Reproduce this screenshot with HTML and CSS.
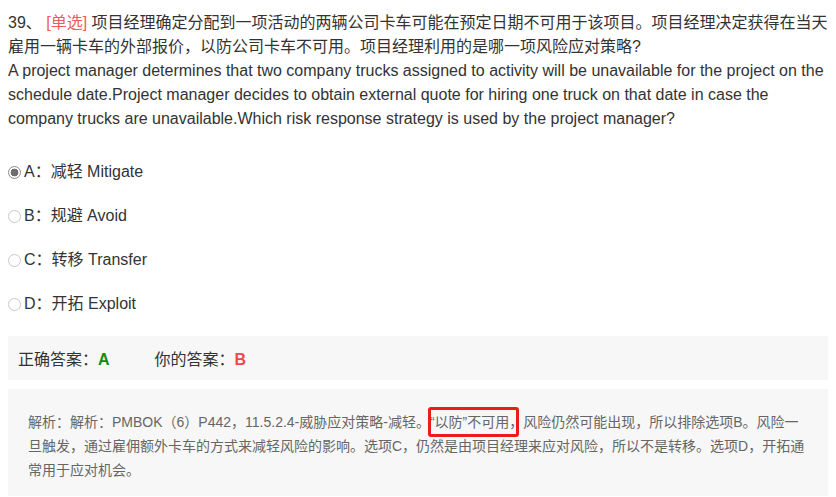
FILE: index.html
```html
<!DOCTYPE html>
<html lang="zh-CN">
<head>
<meta charset="utf-8">
<link rel="stylesheet" href="styles.css">
</head>
<body>
<div class="page">
  <div class="question">
    <span class="num">39、</span> <span class="tag">[单选]</span> 项目经理确定分配到一项活动的两辆公司卡车可能在预定日期不可用于该项目。项目经理决定获得在当天雇用一辆卡车的外部报价，以防公司卡车不可用。项目经理利用的是哪一项风险应对策略?<br>A project manager determines that two company trucks assigned to activity will be unavailable for the project on the schedule date.Project manager decides to obtain external quote for hiring one truck on that date in case the company trucks are unavailable.Which risk response strategy is used by the project manager?
  </div>
  <ul class="options">
    <li class="option"><span class="radio checked"></span><span>A：减轻 Mitigate</span></li>
    <li class="option"><span class="radio"></span><span>B：规避 Avoid</span></li>
    <li class="option"><span class="radio"></span><span>C：转移 Transfer</span></li>
    <li class="option"><span class="radio"></span><span>D：开拓 Exploit</span></li>
  </ul>
  <div class="answers">
    <span class="ans">正确答案：<b class="right">A</b></span>
    <span class="ans">你的答案：<b class="wrong">B</b></span>
  </div>
  <div class="analysis">
    解析：解析：PMBOK（6）P442，11.5.2.4-威胁应对策略-减轻。<span class="mark">“以防”不可用，</span>风险仍然可能出现，所以排除选项B。风险一旦触发，通过雇佣额外卡车的方式来减轻风险的影响。选项C，仍然是由项目经理来应对风险，所以不是转移。选项D，开拓通常用于应对机会。
  </div>
</div>
</body>
</html>
```

FILE: styles.css
```css
* { box-sizing: border-box; }
html, body { margin: 0; padding: 0; background: #fff; }
body {
  font-family: "Liberation Sans", Arial, "Noto Sans CJK SC", sans-serif;
  color: #333;
  overflow: hidden;
}
.page {
  padding: 11px 8px 0 8px;
}
.question {
  font-size: 16px;
  line-height: 24px;
}
.tag { color: #f05a5a; }
.options {
  list-style: none;
  margin: 29px 0 0 0;
  padding: 0;
}
.option {
  display: flex;
  align-items: center;
  font-size: 16px;
  line-height: 24px;
  height: 24px;
  margin-bottom: 20px;
}
.radio {
  width: 13px;
  height: 13px;
  border-radius: 50%;
  border: 1px solid #c8c8c8;
  background: #fff;
  margin-right: 3px;
  flex: none;
  position: relative;
}
.radio.checked {
  border-color: #8a8a8a;
  background: radial-gradient(circle, #6e6e6e 0 3.6px, #fff 4.2px);
}
.answers {
  margin-top: 0;
  height: 44px;
  background: #f7f7f7;
  display: flex;
  align-items: center;
  padding-left: 10px;
  font-size: 16px;
  gap: 45px;
}
.ans b { font-weight: bold; }
.right { color: #128a12; }
.wrong { color: #f04848; }
.analysis {
  margin-top: 9px;
  background: #f7f7f7;
  padding: 21px 20px 14px 20px;
  font-size: 14px;
  line-height: 24px;
  color: #666;
}
.mark {
  position: relative;
}
.mark::after {
  content: "";
  position: absolute;
  left: -2px;
  right: 4px;
  top: -7px;
  bottom: -7px;
  border: 3px solid #ea1c1c;
  border-radius: 3px;
}
```
